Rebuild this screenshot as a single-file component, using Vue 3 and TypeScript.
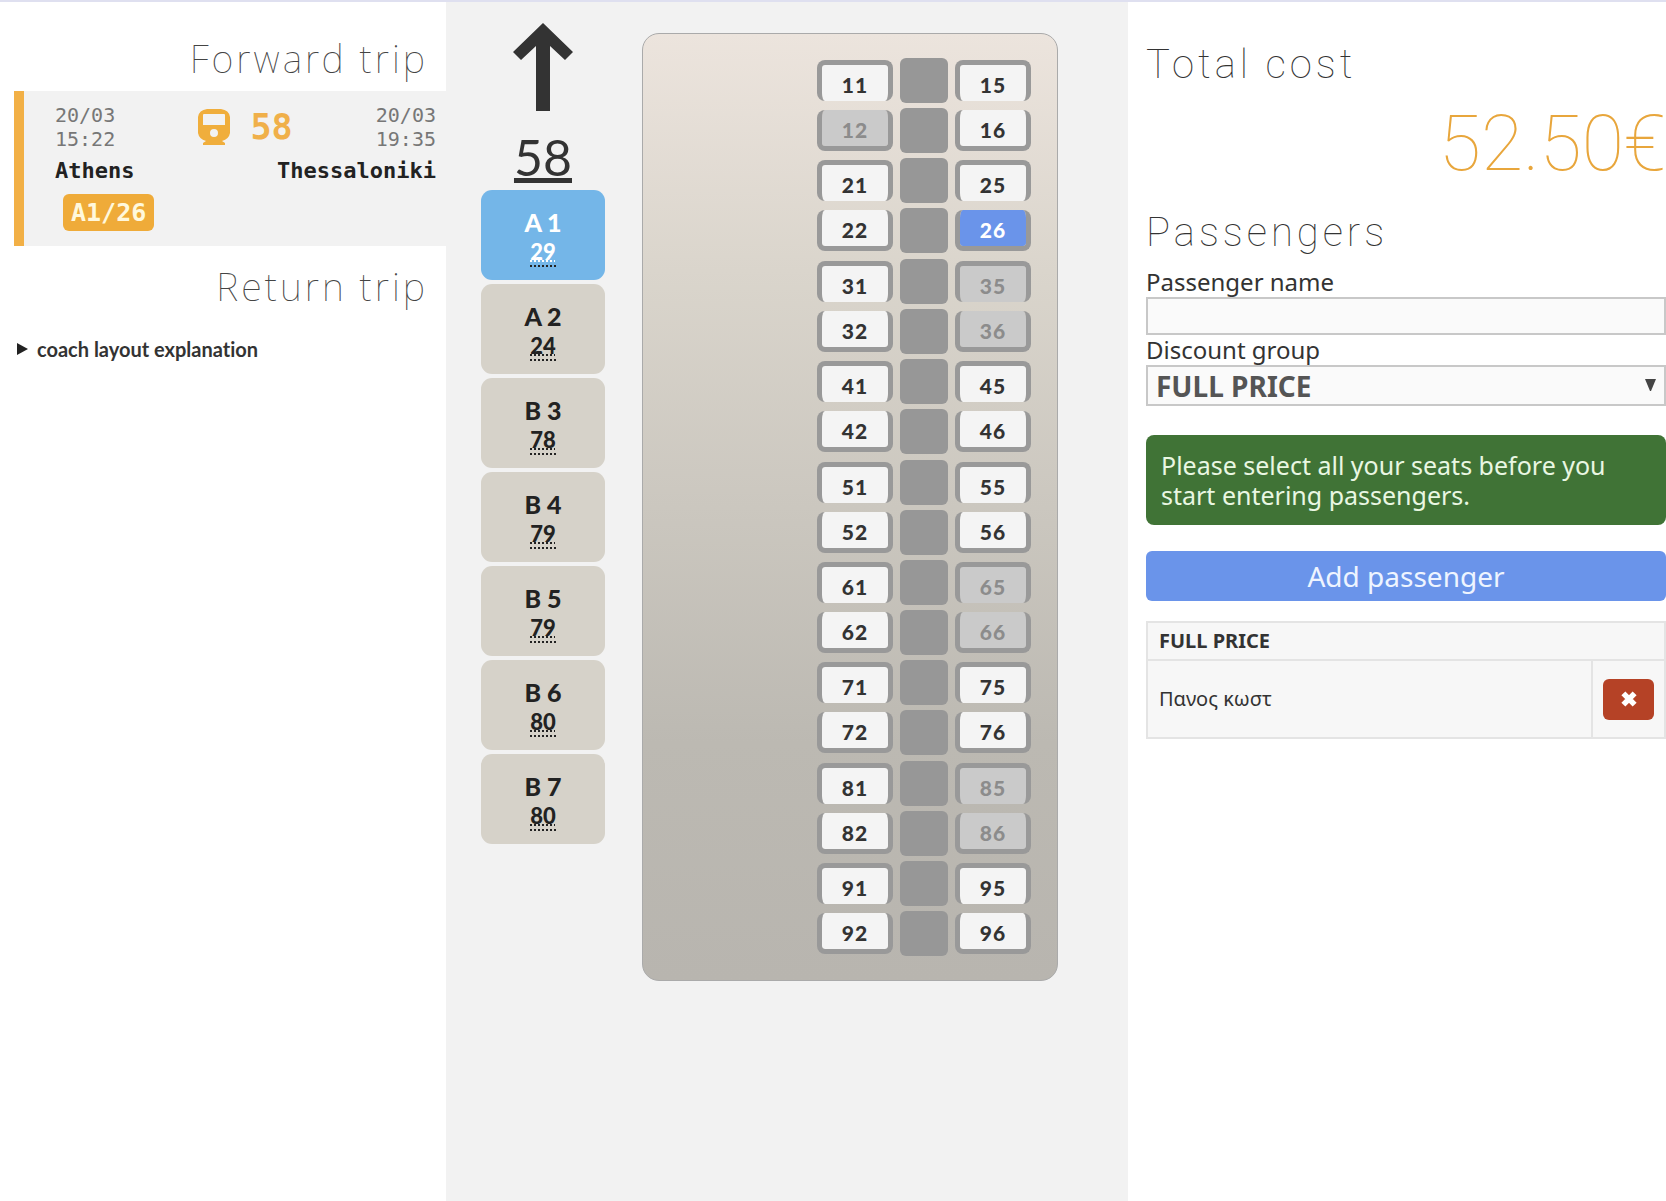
<script setup lang="ts">
import { ref } from 'vue'

interface Coach {
  name: string
  free: number
}

interface Seat {
  id: number
  taken: boolean
}

const coaches: Coach[] = [
  { name: 'A 1', free: 29 },
  { name: 'A 2', free: 24 },
  { name: 'B 3', free: 78 },
  { name: 'B 4', free: 79 },
  { name: 'B 5', free: 79 },
  { name: 'B 6', free: 80 },
  { name: 'B 7', free: 80 },
]
const activeCoach = ref('A 1')

const takenSeats = new Set([12, 35, 36, 65, 66, 85, 86])
const selectedSeat = ref(26)

const seat = (id: number): Seat => ({ id, taken: takenSeats.has(id) })

// Each bay holds two rows; a row has one seat on either side of the aisle block.
const bays = Array.from({ length: 9 }, (_, i) => {
  const base = (i + 1) * 10
  return [
    { left: seat(base + 1), right: seat(base + 5) },
    { left: seat(base + 2), right: seat(base + 6) },
  ]
})

const passengerName = ref('')
const discount = ref('FULL PRICE')
const passengers = ref(['Πανος κωστ'])
</script>

<template>
  <div class="page">
    <aside class="trips">
      <h2 class="heading">Forward trip</h2>
      <section class="trip">
        <div class="trip-top">
          <div class="when">20/03<br />15:22</div>
          <div class="train">
            <svg class="train-icon" viewBox="0 0 32 36" aria-hidden="true">
              <path
                fill="#f0ae3c"
                fill-rule="evenodd"
                d="M9 0H23Q31 1 32 8V24Q31 30 24 32L27 34V36H5V34L8 32Q1 30 0 24V8Q1 1 9 0ZM6 5Q5 5 5 6V16H27V6Q27 5 26 5ZM16 20A4 4 0 1 0 16 28A4 4 0 1 0 16 20Z"
              />
            </svg>
            <span>58</span>
          </div>
          <div class="when end">20/03<br />19:35</div>
        </div>
        <div class="stations">
          <span>Athens</span>
          <span>Thessaloniki</span>
        </div>
        <span class="badge">A1/26</span>
      </section>
      <h2 class="heading return">Return trip</h2>
      <details class="legend">
        <summary>
          <svg class="marker" viewBox="0 0 11 12" aria-hidden="true"><path d="M0 0L11 6L0 12Z" fill="#222" /></svg>
          coach layout explanation
        </summary>
      </details>
    </aside>

    <main class="layout">
      <div class="coaches">
        <svg class="arrow" viewBox="0 0 60 88" aria-hidden="true">
          <path d="M30 0L60 29L52 37L37 23V88H23V23L8 37L0 29Z" fill="#333" />
        </svg>
        <div class="train-no">58</div>
        <div class="coach-list">
          <button
            v-for="c in coaches"
            :key="c.name"
            type="button"
            class="coach"
            :class="{ active: c.name === activeCoach }"
            @click="activeCoach = c.name"
          >
            <span>{{ c.name }}</span>
            <abbr>{{ c.free }}</abbr>
          </button>
        </div>
      </div>

      <div class="wagon">
        <div v-for="(bay, i) in bays" :key="i" class="bay">
          <div v-for="(row, r) in bay" :key="r" class="row" :class="r === 0 ? 'upper' : 'lower'">
            <button
              type="button"
              class="seat"
              :class="{ selected: row.left.id === selectedSeat }"
              :disabled="row.left.taken"
              @click="selectedSeat = row.left.id"
            >{{ row.left.id }}</button>
            <span class="aisle"></span>
            <button
              type="button"
              class="seat"
              :class="{ selected: row.right.id === selectedSeat }"
              :disabled="row.right.taken"
              @click="selectedSeat = row.right.id"
            >{{ row.right.id }}</button>
          </div>
        </div>
      </div>
    </main>

    <aside class="booking">
      <h2 class="title">Total cost</h2>
      <div class="price">52.50€</div>
      <h2 class="title">Passengers</h2>
      <form class="form" @submit.prevent>
        <label class="label" for="passenger">Passenger name</label>
        <input id="passenger" v-model="passengerName" class="field" type="text" />
        <label class="label" for="discount">Discount group</label>
        <div class="select-wrap">
          <select id="discount" v-model="discount" class="field select">
            <option>FULL PRICE</option>
          </select>
          <svg class="caret" viewBox="0 0 11 12" aria-hidden="true"><path d="M0 0H11L6 12H5Z" fill="#444" /></svg>
        </div>
        <p class="notice">Please select all your seats before you start entering passengers.</p>
        <button type="submit" class="add">Add passenger</button>
      </form>
      <table class="people">
        <thead>
          <tr><th colspan="2">FULL PRICE</th></tr>
        </thead>
        <tbody>
          <tr v-for="p in passengers" :key="p">
            <td>{{ p }}</td>
            <td class="action">
              <button type="button" class="remove" aria-label="Remove passenger">
                <svg viewBox="0 0 16 16" aria-hidden="true">
                  <path d="M3 3L13 13M13 3L3 13" stroke="#fff" stroke-width="5" />
                </svg>
              </button>
            </td>
          </tr>
        </tbody>
      </table>
    </aside>
  </div>
</template>

<style>
body {
  background: #fff;
}
</style>

<style scoped>
* {
  box-sizing: border-box;
}
.page {
  display: grid;
  grid-template-columns: 446fr 682fr 538fr;
  min-height: 100vh;
  border-top: 2px solid #dfe0f0;
  color: #333;
  font-family: Lato, sans-serif;
}
button {
  border: 0;
  padding: 0;
  font-family: inherit;
  cursor: pointer;
}

/* trips */
.trips {
  padding: 32px 0 0 14px;
  font-family: 'DejaVu Sans Mono', monospace;
}
.heading {
  margin: 0;
  padding-right: 18px;
  text-align: right;
  font: 100 38px/48px 'Noto Sans', sans-serif;
  letter-spacing: 3px;
  color: #444;
}
.trip {
  margin-top: 9px;
  padding: 12px 10px 15px 31px;
  border-left: 10px solid #f2b046;
  background: #f2f2f2;
}
.trip-top {
  display: flex;
  justify-content: space-between;
}
.when {
  font-size: 20px;
  line-height: 24px;
  color: #777;
}
.end {
  text-align: right;
}
.train {
  display: flex;
  align-items: center;
  gap: 20px;
  font-size: 35px;
  line-height: 44px;
  font-weight: 700;
  color: #f0b04a;
}
.train-icon {
  width: 32px;
  height: 36px;
}
.stations {
  display: flex;
  justify-content: space-between;
  margin-top: 5px;
  font-size: 22px;
  line-height: 30px;
  font-weight: 700;
  color: #222;
}
.badge {
  display: table;
  margin: 8px 0 0 8px;
  padding: 0 8px;
  border-radius: 6px;
  background: #efab39;
  color: #fff8dc;
  font-size: 25px;
  line-height: 37px;
  font-weight: 700;
}
.return {
  margin-top: 16px;
}
.legend {
  margin: 27px 0 0 3px;
  font: 700 20px/24px Lato, sans-serif;
  font-variant-ligatures: no-common-ligatures;
}
.legend summary {
  display: flex;
  align-items: center;
  gap: 9px;
  list-style: none;
}
.marker {
  width: 11px;
  height: 12px;
}

/* coach picker and seat map */
.layout {
  display: flex;
  align-items: flex-start;
  gap: 37px;
  padding: 21px 0 24px 35px;
  background: #f2f2f2;
}
.coaches {
  width: 124px;
  text-align: center;
}
.arrow {
  display: block;
  width: 60px;
  height: 88px;
  margin: 0 auto;
}
.train-no {
  margin: 16px 0 3px;
  font-size: 50px;
  line-height: 60px;
  text-decoration: underline;
  text-decoration-thickness: 5px;
  text-decoration-skip-ink: none;
  text-underline-offset: 2px;
}
.coach-list {
  display: flex;
  flex-direction: column;
  gap: 4px;
}
.coach {
  display: flex;
  flex-direction: column;
  align-items: center;
  justify-content: center;
  height: 90px;
  padding-top: 3px;
  border-radius: 11px;
  background: #d6d2c9;
  color: #222;
  font-size: 25px;
  line-height: 32px;
  font-weight: 900;
}
.coach abbr {
  border-bottom: 2px dotted #222;
  font-size: 22px;
  line-height: 27px;
  text-decoration: underline dotted 2px;
  text-underline-offset: 0;
}
.active {
  background: #74b6e8;
  color: #fff;
}
.wagon {
  display: flex;
  flex-direction: column;
  justify-content: space-between;
  flex: 0 0 416px;
  min-height: 948px;
  margin-top: 10px;
  padding: 22px 26px 21px;
  border: 1px solid #aaa;
  border-radius: 17px;
  background: linear-gradient(#ece4dd, #dad5cc 25%, #bcb9b2 75%, #b8b5af);
}
.row {
  display: flex;
  justify-content: flex-end;
  align-items: flex-start;
  gap: 7px;
  height: 50px;
}
.aisle {
  width: 48px;
  height: 45px;
  margin-top: 2px;
  border-radius: 6px;
  background: #979797;
}
.seat {
  width: 76px;
  height: 41px;
  border: 5px solid #999;
  border-radius: 8px;
  background: #f4f4f4;
  background-clip: padding-box;
  color: #333;
  font-size: 21px;
  line-height: 26px;
  font-weight: 900;
  letter-spacing: 1px;
}
.upper .seat {
  margin-top: 4px;
  padding-top: 4px;
  border-bottom: 0;
}
.lower .seat {
  margin-top: 4px;
  padding-top: 4px;
  border-top: 0;
}
.seat:disabled {
  background-color: #cacaca;
  color: #8c8c8c;
}
.seat.selected {
  background-color: #6a94ea;
  color: #fff;
}

/* booking */
.booking {
  min-width: 0;
  padding: 38px 0 24px 18px;
  font-family: 'Noto Sans', sans-serif;
}
.title {
  margin: 0;
  font: 100 40px/50px Roboto, sans-serif;
  letter-spacing: 4px;
  color: #333;
}
.price {
  margin: 10px 0 20px;
  text-align: right;
  white-space: nowrap;
  font: 100 77px/88px Roboto, sans-serif;
  color: #e8a63c;
}
.form {
  margin-top: 9px;
}
.label {
  display: block;
  font-size: 24px;
  line-height: 30px;
}
.field {
  display: block;
  width: 100%;
  height: 38px;
  padding: 0 8px;
  border: 2px solid #c8c8c8;
  border-radius: 0;
  background: #fafafa;
  font: 24px 'Noto Sans', sans-serif;
  color: #555;
}
.select-wrap {
  position: relative;
}
.select {
  appearance: none;
  height: 41px;
  padding-bottom: 2px;
  font-size: 28px;
  font-weight: 700;
}
.caret {
  position: absolute;
  right: 10px;
  top: 14px;
  width: 11px;
  height: 12px;
}
.notice {
  margin: 29px 0 26px;
  padding: 15px;
  border-radius: 8px;
  background: #407336;
  color: #e9f7e2;
  font-size: 25px;
  line-height: 30px;
}
.add {
  display: block;
  width: 100%;
  height: 50px;
  border-radius: 6px;
  background: #6a94ea;
  color: #eef4ff;
  font-size: 28px;
}
.people {
  width: 100%;
  margin-top: 20px;
  border-collapse: collapse;
  background: #f7f7f7;
  font-size: 20px;
  line-height: 26px;
}
.people th,
.people td {
  padding: 5px 11px;
  border: 2px solid #e4e4e4;
  text-align: left;
}
.people td {
  height: 78px;
}
.people .action {
  width: 72px;
  padding: 5px 10px;
}
.remove {
  display: flex;
  align-items: center;
  justify-content: center;
  width: 51px;
  height: 41px;
  border-radius: 6px;
  background: #b54226;
}
.remove svg {
  width: 18px;
  height: 18px;
}
</style>
